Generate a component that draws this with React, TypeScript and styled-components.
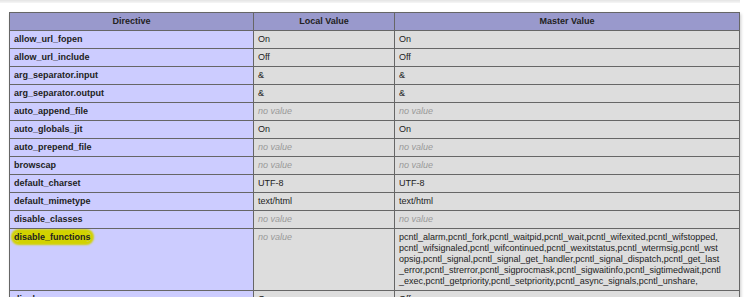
import React from 'react';
import styled, {createGlobalStyle} from 'styled-components';

const GlobalStyle = createGlobalStyle`
  html, body {
    margin: 0;
    padding: 0;
    background: #fff;
  }
  body {
    font-family: "Liberation Sans", Arial, sans-serif;
    color: #222;
  }
`;

const rows: [string, string, string][] = [
    ['allow_url_fopen', 'On', 'On'],
    ['allow_url_include', 'Off', 'Off'],
    ['arg_separator.input', '&', '&'],
    ['arg_separator.output', '&', '&'],
    ['auto_append_file', '', ''],
    ['auto_globals_jit', 'On', 'On'],
    ['auto_prepend_file', '', ''],
    ['browscap', '', ''],
    ['default_charset', 'UTF-8', 'UTF-8'],
    ['default_mimetype', 'text/html', 'text/html'],
    ['disable_classes', '', ''],
];

const disabledLines = [
    'pcntl_alarm,pcntl_fork,pcntl_waitpid,pcntl_wait,pcntl_wifexited,pcntl_wifstopped,',
    'pcntl_wifsignaled,pcntl_wifcontinued,pcntl_wexitstatus,pcntl_wtermsig,pcntl_wst',
    'opsig,pcntl_signal,pcntl_signal_get_handler,pcntl_signal_dispatch,pcntl_get_last',
    '_error,pcntl_strerror,pcntl_sigprocmask,pcntl_sigwaitinfo,pcntl_sigtimedwait,pcntl',
    '_exec,pcntl_getpriority,pcntl_setpriority,pcntl_async_signals,pcntl_unshare,',
];

const Value = ({text}: {text: string}) =>
    text ? <>{text}</> : <NoValue>no value</NoValue>;

export default function App() {
    return (
        <Page>
            <GlobalStyle/>
            <PrevEdge/>
            <Table>
                <colgroup>
                    <col style={{width: 244}}/>
                    <col style={{width: 141}}/>
                    <col style={{width: 345}}/>
                </colgroup>
                <thead>
                <tr>
                    <Head>Directive</Head>
                    <Head>Local Value</Head>
                    <Head>Master Value</Head>
                </tr>
                </thead>
                <tbody>
                {rows.map(([name, local, master]) => (
                    <tr key={name}>
                        <Name>{name}</Name>
                        <Cell><Value text={local}/></Cell>
                        <Cell><Value text={master}/></Cell>
                    </tr>
                ))}
                <tr>
                    <Name><Marked>disable_functions</Marked></Name>
                    <Cell><NoValue>no value</NoValue></Cell>
                    <Cell>
                        {disabledLines.map(line => <Line key={line}>{line}</Line>)}
                    </Cell>
                </tr>
                <tr>
                    <Name>display_errors</Name>
                    <Cell>On</Cell>
                    <Cell>Off</Cell>
                </tr>
                </tbody>
            </Table>
        </Page>
    );
}

const Page = styled.div`
  width: 750px;
  height: 297px;
  overflow: hidden;
`

const PrevEdge = styled.div`
  width: 740px;
  height: 3px;
  background: linear-gradient(#e4e4e4, #f6f6f6);
  margin-bottom: 9px;
`

const Table = styled.table`
  margin-left: 9px;
  width: 731px;
  table-layout: fixed;
  border-collapse: collapse;
  border: 0;
  box-shadow: 1px 2px 3px #ccc;
`

const cell = `
  border: 1px solid #666;
  font-size: 9px;
  line-height: 11px;
  padding: 3px 4px;
  vertical-align: baseline;
  text-align: left;
  white-space: nowrap;
  overflow: hidden;
`

const Head = styled.th`
  ${cell};
  background-color: #99c;
  font-weight: bold;
  text-align: center;
  color: #222;
`

const Name = styled.td`
  ${cell};
  background-color: #ccf;
  font-weight: bold;
`

const Cell = styled.td`
  ${cell};
  background-color: #ddd;
`

const NoValue = styled.i`
  color: #999;
`

const Line = styled.div`
  white-space: nowrap;
`

const Marked = styled.span`
  background: #d2d200;
  border-radius: 5px;
  box-shadow: 0 0 2px 3px #d2d200;
`
